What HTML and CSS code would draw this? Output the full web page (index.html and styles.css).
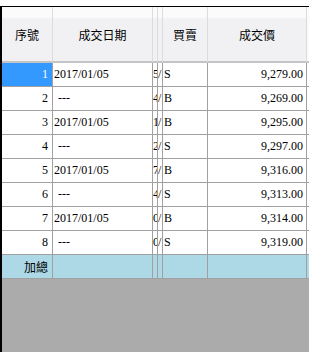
FILE: index.html
```html
<!DOCTYPE html>
<html lang="zh-Hant">
<head>
  <meta charset="UTF-8">
  <meta name="viewport" content="width=device-width, initial-scale=1.0">
  <title>成交明細</title>
  <link rel="stylesheet" href="styles.css">
</head>
<body>

  <!-- 成交明細表格 -->
  <div class="grid-frame">
    <table class="grid">
      <thead>
        <tr>
          <th class="c-no">序號</th>
          <th class="c-date">成交日期</th>
          <th class="c-thin"></th>
          <th class="c-thin"></th>
          <th class="c-side">買賣</th>
          <th class="c-price">成交價</th>
          <th class="c-rest"></th>
        </tr>
      </thead>
      <tbody>
        <tr>
          <td class="num selected">1</td>
          <td>2017/01/05</td>
          <td class="thin">5</td>
          <td class="thin">/</td>
          <td>S</td>
          <td class="num">9,279.00</td>
          <td></td>
        </tr>
        <tr>
          <td class="num">2</td>
          <td class="dash">---</td>
          <td class="thin">4</td>
          <td class="thin">/</td>
          <td>B</td>
          <td class="num">9,269.00</td>
          <td></td>
        </tr>
        <tr>
          <td class="num">3</td>
          <td>2017/01/05</td>
          <td class="thin">1</td>
          <td class="thin">/</td>
          <td>B</td>
          <td class="num">9,295.00</td>
          <td></td>
        </tr>
        <tr>
          <td class="num">4</td>
          <td class="dash">---</td>
          <td class="thin">2</td>
          <td class="thin">/</td>
          <td>S</td>
          <td class="num">9,297.00</td>
          <td></td>
        </tr>
        <tr>
          <td class="num">5</td>
          <td>2017/01/05</td>
          <td class="thin">7</td>
          <td class="thin">/</td>
          <td>B</td>
          <td class="num">9,316.00</td>
          <td></td>
        </tr>
        <tr>
          <td class="num">6</td>
          <td class="dash">---</td>
          <td class="thin">4</td>
          <td class="thin">/</td>
          <td>S</td>
          <td class="num">9,313.00</td>
          <td></td>
        </tr>
        <tr>
          <td class="num">7</td>
          <td>2017/01/05</td>
          <td class="thin">0</td>
          <td class="thin">/</td>
          <td>B</td>
          <td class="num">9,314.00</td>
          <td></td>
        </tr>
        <tr>
          <td class="num">8</td>
          <td class="dash">---</td>
          <td class="thin">0</td>
          <td class="thin">/</td>
          <td>S</td>
          <td class="num">9,319.00</td>
          <td></td>
        </tr>
        <tr class="total">
          <td class="num cjk">加總</td>
          <td></td>
          <td class="thin"></td>
          <td class="thin"></td>
          <td></td>
          <td></td>
          <td></td>
        </tr>
      </tbody>
    </table>
  </div>

</body>
</html>
```

FILE: styles.css
```css
html, body {
  margin: 0;
  padding: 0;
  height: 100%;
  background: #fff;
}

body {
  padding-top: 6px;
  box-sizing: border-box;
}

.grid-frame {
  height: 100%;
  box-sizing: border-box;
  border-top: 1px solid #000;
  border-left: 2px solid #000;
  background: #ababab;
}

.grid {
  width: 100%;
  table-layout: fixed;
  border-collapse: separate;
  border-spacing: 0;
  font-family: "Liberation Serif", "Noto Sans CJK TC", serif;
  font-size: 12px;
  color: #000;
}

/* 表頭 */
.grid th {
  box-sizing: border-box;
  height: 56px;
  padding: 0;
  font-family: "Noto Sans CJK TC", sans-serif;
  font-size: 12px;
  font-weight: normal;
  text-align: center;
  background: linear-gradient(to bottom, #fbfbfb 0, #fbfbfb 10px, #f1f1f3 12px, #f1f1f3 100%);
  border-right: 1px solid #dcdcdc;
  border-bottom: 2px solid #c4c4c4;
}

.grid th.c-no { width: 51px; }
.grid th.c-date { width: 100px; }
.grid th.c-thin { width: 5px; }
.grid th.c-side { width: 45px; }
.grid th.c-price { width: 99px; }
.grid th.c-rest {
  border-right: none;
  background: #fafafa;
}

/* 資料列 */
.grid td {
  height: 23px;
  padding: 0 0 0 1px;
  background: #fff;
  border-right: 1px solid #a0a0a0;
  border-bottom: 1px solid #a0a0a0;
  white-space: nowrap;
  overflow: hidden;
}

.grid td:last-child { border-right: none; }

.grid td.num {
  text-align: right;
  padding-right: 3px;
}

.grid td:first-child.num { padding-right: 4px; }

.grid td.dash { padding-left: 5px; }

.grid td.thin {
  padding: 0;
  text-overflow: clip;
}

.grid td.selected {
  background: #3399ff;
  color: #fff;
}

.grid td.cjk {
  font-family: "Noto Sans CJK TC", sans-serif;
}

.total td { background: #add8e6; }
```
